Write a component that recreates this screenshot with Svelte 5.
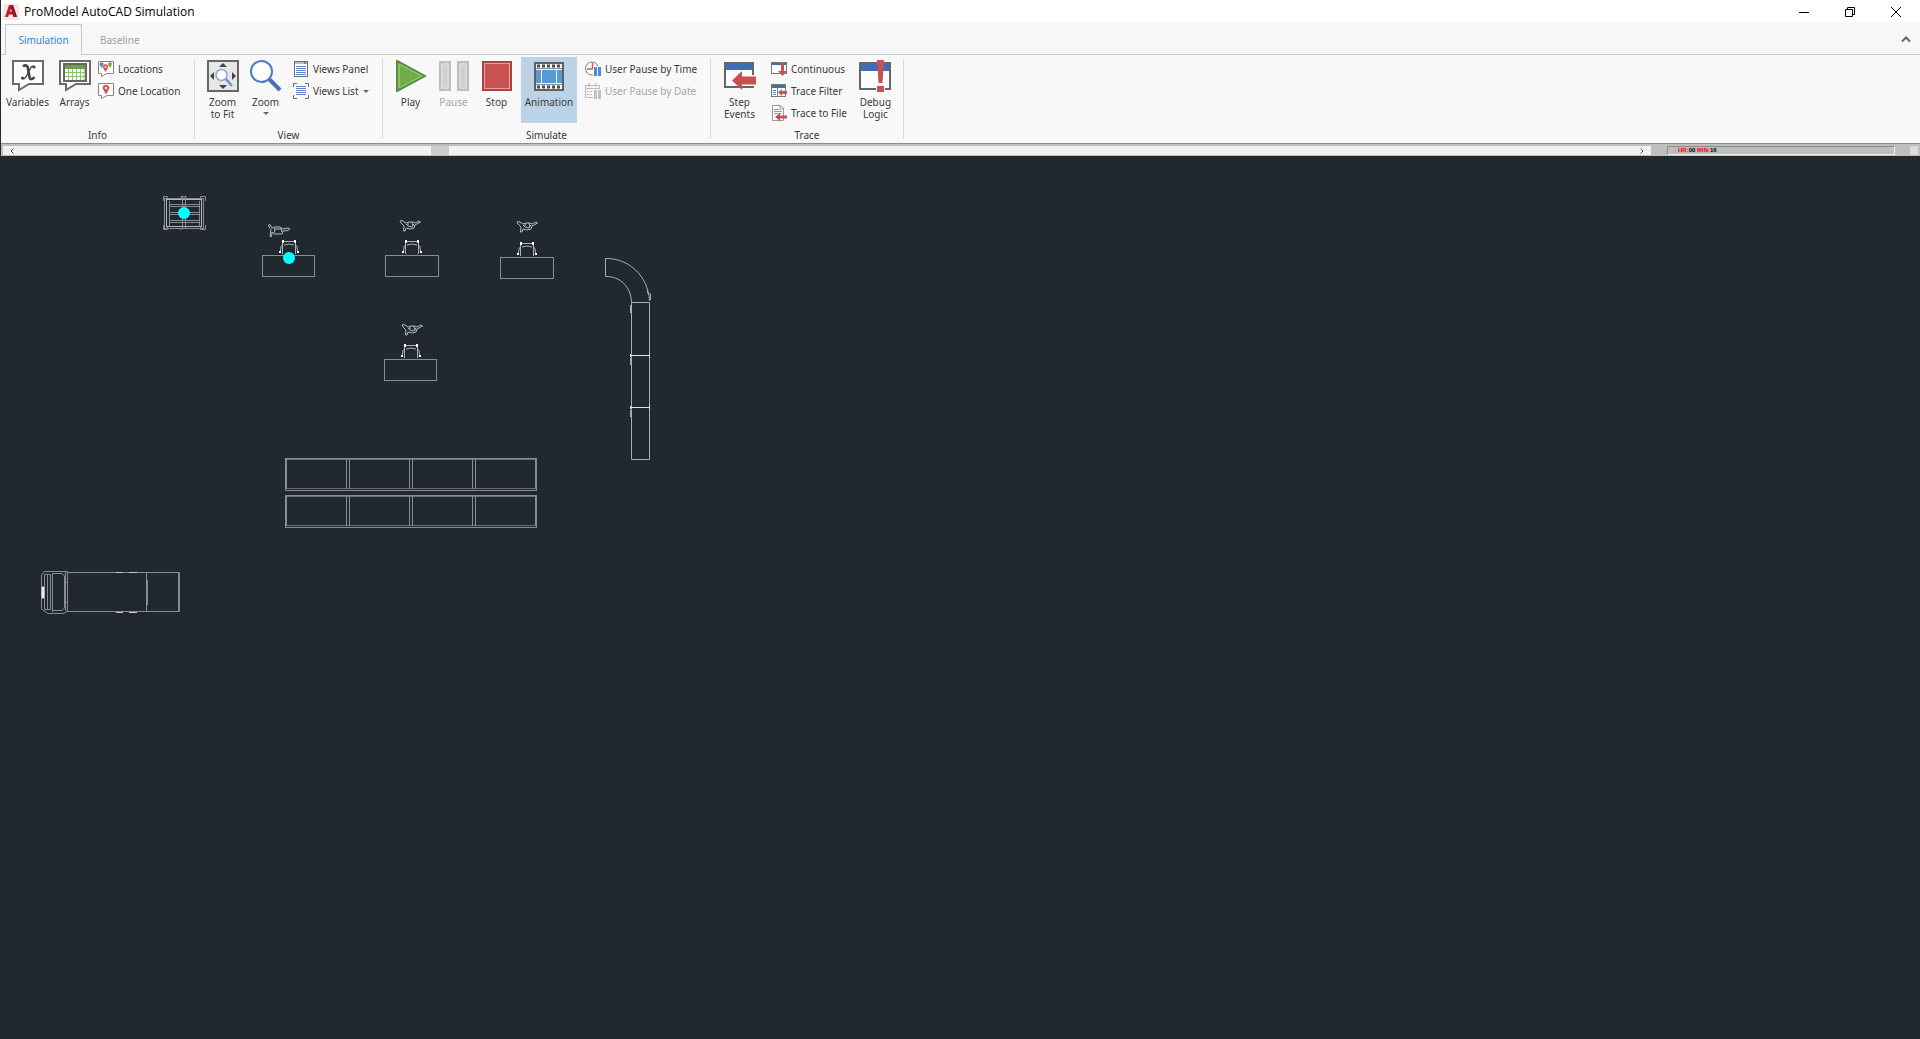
<script>
  const tabs = ['Simulation', 'Baseline'];
  const desks = [
    { x: 262, y: 255, w: 52, chair: [289, 240], person: [268, 224], pose: 'reach' },
    { x: 385, y: 255, w: 53, chair: [412, 240], person: [400, 220], pose: 'stand' },
    { x: 500, y: 257, w: 53, chair: [527, 242], person: [517, 221], pose: 'stand' },
    { x: 384, y: 359, w: 52, chair: [411, 344], person: [402, 324], pose: 'stand' }
  ];
  const racks = [458, 495];
  const bays = [0, 63, 126, 189];
</script>

{#snippet icon(name, size)}
  <svg class="icon" width={size} height={size} viewBox="0 0 {size} {size}" aria-hidden="true">
    {#if name === 'variables' || name === 'arrays'}
      <path d="M1 1H31V24H17L7 30V24H1Z" fill="#fff" stroke="#6b6b6b" stroke-width="2" />
      {#if name === 'variables'}
        <path d="M11 6.500C14 4 16 6 16 9L17.500 17C18 20 20 20 22.500 17" fill="none" stroke="#444" stroke-width="2.600" />
        <path d="M22.500 7C19 4 17.500 11 15.500 14C13.500 18 12 20 10 18" fill="none" stroke="#444" stroke-width="1.300" />
        <circle cx="22" cy="7" r="1.600" fill="#444" /><circle cx="10.500" cy="18" r="1.600" fill="#444" />
      {:else}
        <rect x="5" y="4" width="22" height="17" fill="#fff" stroke="#666" stroke-width="2" />
        <rect x="6" y="5" width="20" height="4" fill="#66a544" />
        <path d="M6 12.500H26M6 16.500H26M9.500 9V20M13.500 9V20M17.500 9V20M21.500 9V20M25 9V20" stroke="#8fc06e" />
      {/if}
    {:else if name === 'locations' || name === 'one'}
      <path d="M.5.5H15.500V12.500H9L3.500 15.500V12.500H.5Z" fill="#fff" stroke="#858585" />
      {#if name === 'locations'}
        <path d="M3.500 7L1.700 4A2 2 0 1 1 5.300 4Z" fill="#5b86cc" />
        <path d="M12 7L10.200 4A2 2 0 1 1 13.800 4Z" fill="#72b04c" />
        <path d="M7.500 11L5.200 7A2.600 2.600 0 1 1 9.800 7Z" fill="#d84a48" /><circle cx="7.500" cy="6" r="1" fill="#fff" />
      {:else}
        <path d="M8 11.500L5.200 6.500A3.200 3.200 0 1 1 10.800 6.500Z" fill="#d05050" /><circle cx="8" cy="5" r="1.200" fill="#fff" />
      {/if}
    {:else if name === 'fit'}
      <rect x="1" y="1" width="30" height="30" fill="#e6e6e6" stroke="#666" stroke-width="2" />
      <path d="M16 3L20 7H12ZM16 29L20 25H12ZM3 16L7 12V20ZM29 16L25 12V20Z" fill="#444" />
      <path d="M18 18L25 26" stroke="#7292cb" stroke-width="2.500" />
      <circle cx="14.500" cy="15" r="5.500" fill="#fff" stroke="#8ba7da" stroke-width="1.500" />
    {:else if name === 'zoom'}
      <path d="M18 18L30 30" stroke="#4772bb" stroke-width="4" />
      <circle cx="11.500" cy="11.500" r="10.500" fill="#fff" stroke="#4d7bc5" stroke-width="2" />
    {:else if name === 'panel'}
      <rect x="1.500" y=".5" width="13" height="15" fill="#fff" stroke="#6f6f6f" />
      <rect x="2" y="1" width="12" height="2" fill="#bcbcbc" /><rect x="11" y="1" width="2" height="2" fill="#c86060" />
      <path d="M3 5.500H13M3 7.500H13M3 9.500H13M3 11.500H13M3 13.500H13" stroke="#5b83c6" />
    {:else if name === 'list'}
      <path d="M.5 4V.5H4M12 .5H15.500V4M15.500 12V15.500H12M4 15.500H.5V12" fill="none" stroke="#6c6c6c" />
      <path d="M3 3.500H13M3 5.500H13M3 7.500H13M3 9.500H13M3 11.500H13" stroke="#5b83c6" />
    {:else if name === 'play'}
      <path d="M2 1L30 16L2 31Z" fill="#6fad48" stroke="#578e38" stroke-width="2" />
      <path d="M4 4L27 16L4 28Z" fill="none" stroke="#a4cf87" />
    {:else if name === 'pause'}
      <path d="M2 2H12V30H2ZM20 2H30V30H20Z" fill="#d0d0d0" stroke="#bebebe" stroke-width="2" />
      <path d="M4 4H10V28H4ZM22 4H28V28H22Z" fill="none" stroke="#e3e3e3" />
    {:else if name === 'stop'}
      <rect x="2" y="2" width="28" height="28" fill="#c75250" stroke="#a84240" stroke-width="2" />
      <rect x="3.500" y="3.500" width="25" height="25" fill="none" stroke="#e4a19e" />
    {:else if name === 'film'}
      <rect x="2" y="3" width="28" height="27" fill="#f3f3f3" stroke="#606060" stroke-width="2" />
      <path d="M4 6H29M4 27H29" stroke="#4d4d4d" stroke-width="3" stroke-dasharray="3 2" />
      <path d="M3 10H8V23H3ZM9 10H23V23H9ZM24 10H29V23H24Z" fill="#569bd6" />
      <path d="M3 8.500H29M3 24.500H29" stroke="#8a8a8a" />
    {:else if name === 'time'}
      <circle cx="7" cy="7.500" r="6.500" fill="#fff" stroke="#777" />
      <path d="M7.500 2V8H2" fill="none" stroke="#dc5550" stroke-width="1.500" />
      <path d="M8 5H16V16H8Z" fill="#f8f8f8" /><path d="M9 6H12V15H9ZM13 6H16V15H13Z" fill="#4b8dca" />
    {:else if name === 'date'}
      <path d="M.5 2.500H14.500V14.500H.5ZM1 5.500H14M4 0V4M11 0V4" fill="none" stroke="#bbb" />
      <path d="M2 8.500H8M2 11.500H8" stroke="#bbb" stroke-dasharray="2 1" />
      <path d="M8 6H16V16H8Z" fill="#f8f8f8" /><path d="M9 7H12V16H9ZM13 7H16V16H13Z" fill="#c2c2c2" />
    {:else if name === 'step'}
      <rect x="1" y="3" width="28" height="24" fill="#fff" stroke="#666" stroke-width="2" />
      <rect x="2" y="4" width="26" height="6" fill="#416db5" />
      <path d="M27 15H31V26H27Z" fill="#f8f8f8" />
      <path d="M8 20.500L18 11V16.500H32V24.500H18V30Z" fill="#c75250" />
    {:else if name === 'debug'}
      <rect x="1" y="3" width="30" height="26" fill="#fff" stroke="#666" stroke-width="2" />
      <rect x="2" y="4" width="28" height="7" fill="#416db5" />
      <path d="M17 12H26V30H17Z" fill="#fff" />
      <path d="M18 0H25L23.500 23H19.500ZM18 26H25V32H18Z" fill="#c75250" />
    {:else if name === 'continuous'}
      <rect x=".5" y="1.500" width="15" height="11" fill="#fff" stroke="#777" /><rect x="1" y="2" width="14" height="2" fill="#416db5" />
      <path d="M10 2H13V10H16L11.500 15L7 10H10Z" fill="#c75250" />
    {:else if name === 'filter'}
      <rect x=".5" y="1.500" width="14" height="12" fill="#fff" stroke="#777" /><rect x="1" y="2" width="13" height="3" fill="#416db5" />
      <path d="M2 7.500H5M2 9.500H5M2 11.500H5" stroke="#5b83c6" /><path d="M6.500 5V13" stroke="#888" />
      <path d="M7 9.500L11 6V8H16V11H11V13Z" fill="#c75250" />
    {:else if name === 'file'}
      <path d="M1.500.5H9.500L12.500 3.500V15.500H1.500Z" fill="#fff" stroke="#999" /><path d="M9 0V4H13" fill="none" stroke="#999" />
      <path d="M3 4.500H8M3 6.500H11M3 8.500H10" stroke="#7b9dd6" />
      <path d="M4 12L9 8V10.500H16V13.500H9V16Z" fill="#c75250" />
    {/if}
  </svg>
{/snippet}

{#snippet big(name, label, opts = {})}
  <button class="big" class:active={opts.active} disabled={opts.disabled}>
    {@render icon(name, 32)}
    <span>{label}</span>
    {#if opts.second}<span>{opts.second}</span>{/if}
    {#if opts.menu}<i class="caret"></i>{/if}
  </button>
{/snippet}

{#snippet small(name, label, opts = {})}
  <button class="small" disabled={opts.disabled}>
    {@render icon(name, 16)}
    <span>{label}</span>
    {#if opts.menu}<i class="caret"></i>{/if}
  </button>
{/snippet}

<div class="window">
  <header class="title">
    <svg class="logo" width="16" height="16" viewBox="0 0 16 16" aria-hidden="true">
      <rect width="16" height="16" fill="#f9e5e2" />
      <path d="M2 13L6 1H10L14 13H10.500L9.800 10.500H6L5 13ZM7 7.500H9.300L8.200 4Z" fill="#b4232a" />
      <path d="M10 1L14 13H10.500L7.500 3Z" fill="#8e1820" />
    </svg>
    <h1>ProModel AutoCAD Simulation</h1>
    <nav class="controls">
      <button aria-label="Minimize"><svg width="10" height="10"><path d="M0 5.500H10" /></svg></button>
      <button aria-label="Restore"><svg width="10" height="10"><path d="M.5 2.500H7.500V9.500H.5ZM2.500 2V.5H9.500V7.500H8" /></svg></button>
      <button aria-label="Close"><svg width="10" height="10"><path d="M0 0L10 10M10 0L0 10" /></svg></button>
    </nav>
  </header>

  <div class="tabs" role="tablist">
    {#each tabs as tab, i}
      <button class="tab" class:selected={i === 0} role="tab" aria-selected={i === 0}>{tab}</button>
    {/each}
    <button class="collapse" aria-label="Collapse ribbon">
      <svg width="10" height="7" viewBox="0 0 10 7"><path d="M1 5.500L5 1.500L9 5.500" fill="none" stroke="#666" stroke-width="2" /></svg>
    </button>
  </div>

  <div class="ribbon">
    <section class="group info">
      <div class="items">
        {@render big('variables', 'Variables')}
        {@render big('arrays', 'Arrays')}
        <div class="stack">
          {@render small('locations', 'Locations')}
          {@render small('one', 'One Location')}
        </div>
      </div>
      <h2>Info</h2>
    </section>
    <section class="group view">
      <div class="items">
        {@render big('fit', 'Zoom', { second: 'to Fit' })}
        {@render big('zoom', 'Zoom', { menu: true })}
        <div class="stack">
          {@render small('panel', 'Views Panel')}
          {@render small('list', 'Views List', { menu: true })}
        </div>
      </div>
      <h2>View</h2>
    </section>
    <section class="group simulate">
      <div class="items">
        {@render big('play', 'Play')}
        {@render big('pause', 'Pause', { disabled: true })}
        {@render big('stop', 'Stop')}
        {@render big('film', 'Animation', { active: true })}
        <div class="stack">
          {@render small('time', 'User Pause by Time')}
          {@render small('date', 'User Pause by Date', { disabled: true })}
        </div>
      </div>
      <h2>Simulate</h2>
    </section>
    <section class="group trace">
      <div class="items">
        {@render big('step', 'Step', { second: 'Events' })}
        <div class="stack">
          {@render small('continuous', 'Continuous')}
          {@render small('filter', 'Trace Filter')}
          {@render small('file', 'Trace to File')}
        </div>
        {@render big('debug', 'Debug', { second: 'Logic' })}
      </div>
      <h2>Trace</h2>
    </section>
  </div>

  <div class="status">
    <div class="scroll">
      <button aria-label="Slower"><svg width="4" height="6"><path d="M3.500 .5L1 3L3.500 5.500" /></svg></button>
      <div class="track"><div class="before"></div><div class="thumb"></div></div>
      <button aria-label="Faster"><svg width="4" height="6"><path d="M.5 .5L3 3L.5 5.500" /></svg></button>
    </div>
    <div class="clock"><b>HR:</b>00 <b>MIN:</b>16</div>
    <div class="grip"></div>
  </div>

  <main>
    <svg class="drawing" role="img" aria-label="Model layout">
      <defs>
        <g id="chair" fill="none" stroke="#aeb2b7">
          <path d="M-6 1.500H6M-5 5Q0 3 5 5M-6.500 2V14M6.500 2V14M-6 4Q-9 6-8.500 12M6 4Q9 6 8.500 12" />
          <path d="M-7 0H-5V3H-7ZM5 0H7V3H5ZM-10 11H-8V13H-10ZM8 11H10V13H8Z" fill="#fff" stroke="none" />
        </g>
        <g id="stand" fill="none" stroke="#b5b9be">
          <path d="M0 1L2 .5L6 3L9 2H13L15 3L19 1L20.500 2L15 5L14 8L10 9L6 8L5 11H3.500L4 6L1 3Z" />
          <path d="M6 4L8 6L12 7L14 4M8 2V5M12 2L13 6" />
        </g>
        <g id="reach" fill="none" stroke="#b5b9be">
          <path d="M.5 1L2 .5L4 4L6 3H12L15 5L20 4L22 5L20 6.500L15 7L14 10H6L4 8L3.500 12.500H2L3 5.500L1 3Z" />
          <path d="M6 4L7 6L6 9M13 4L14 8M7 5H13" />
        </g>
      </defs>

      <g class="sheet">
        <g class="line">
          <rect x="164.500" y="198.500" width="39" height="30" />
          <rect x="166.500" y="199.500" width="35" height="27" stroke="#b5b8bb" />
          <path d="M169.500 201V227M199.500 201V227M182.500 197V229M185.500 197V229M169 204.500H200M169 206.500H200M169 212.500H200M169 214.500H200M169 220.500H200M169 222.500H200" />
          <path d="M163.500 201V196.500H167.500V199M200.500 199V196.500H205.500V201M163.500 225V229.500H167.500V227M200.500 227V229.500H205.500V225" />
          <path d="M181 199V196.500H186V199M181 228V230" />
        </g>

        {#each desks as d}
          <rect class="line" x={d.x + 0.5} y={d.y + 0.5} width={d.w} height="21" />
          <use href="#chair" x={d.chair[0]} y={d.chair[1]} />
          <use href="#{d.pose}" x={d.person[0]} y={d.person[1]} />
        {/each}

        <g class="line bright">
          <path d="M605.500 276.500V258.500C628 258 648 275 649.500 301M605.500 276.500C620 276 631 287 631.500 302" />
          <path d="M631.500 302.500H649.500V459.500H631.500ZM631.500 355.500H649.500M631.500 407.500H649.500" />
          <path d="M630.500 305V313M630.500 358V365M630.500 410V417M647.500 289V293L650.500 294V300" />
          <path d="M630.500 354V357M649.500 353V358M630.500 406V409M649.500 405V410M631 355.500H649M631 407.500H649" stroke="#e0e2e4" />
        </g>

        {#each racks as y}
          <g class="line">
            <rect x="285.500" y={y + 0.5} width="251" height="32" />
            <path d="M286 {y + 1.5}H536M286 {y + 30.5}H536" opacity=".7" />
            {#each bays as b}
              <path d="M{286.5 + b} {y + 1}V{y + 31}M{346.5 + b} {y + 1}V{y + 31}" />
            {/each}
          </g>
        {/each}

        <g class="line">
          <path d="M67.500 572.500H179.500V611.500H67.500ZM146.500 572V611M147.500 580V605M178.500 573V611" />
          <path d="M41.500 575L44 571.500H67.500V611.500L63 613.500H48L41.500 609ZM44.500 574.500H50.500V609.500H44.500ZM47.500 574V610M52.500 573V612M65.500 572V611" />
          <path d="M52 573.500H62L64.500 576V608L62 610.500H52M65 582.500H68M65 602.500H68" />
          <path d="M116 572.500H123M129 572.500H137M116 612.500H123M129 612.500H137" stroke="#c5c7ca" />
          <path d="M42 587H44V598H42Z" fill="#fff" stroke="#ddd" />
        </g>

        <circle cx="184" cy="213" r="6" fill="#0ff" />
        <circle cx="289" cy="258" r="6" fill="#0ff" />
      </g>
    </svg>
  </main>
</div>

<style>
  :global(body) { margin: 0; background: #222830; }
  * { box-sizing: border-box; }
  .window {
    display: flex; flex-direction: column; min-height: 100vh;
    border-left: 1px solid #222830;
    font: 10px/12px "Noto Sans", "Open Sans", sans-serif; color: #3a3a3a;
  }
  button { border: 0; padding: 0; background: none; font: inherit; color: inherit; }
  button:disabled { color: #a6a6a6; }
  h1, h2 { margin: 0; font-weight: 400; }
  .title { display: flex; align-items: center; height: 23px; padding-left: 2px; background: #fff; color: #000; }
  .title h1 { flex: 1; padding-left: 5px; font-family: "Open Sans", "Noto Sans", sans-serif; font-size: 12px; line-height: 16px; }
  .controls { display: flex; align-self: stretch; padding-right: 1px; }
  .controls button { width: 46px; display: grid; place-items: center; }
  .controls svg { display: block; fill: none; stroke: #000; }
  .tabs { display: flex; align-items: stretch; height: 32px; padding-left: 4px; background: #f7f7f7; box-shadow: inset 0 -1px #c8c8c8; }
  .tab { padding: 0 18px; margin-top: 1px; color: #a0a0a0; }
  .tab.selected { width: 77px; padding: 0; color: #2a86d1; background: #f8f8f8; border: 1px solid #c8c8c8; border-bottom: 0; }
  .collapse { margin-left: auto; padding: 0 9px; }
  .ribbon { display: flex; height: 88px; padding: 2px 0; background: #f8f8f8; }
  .group { display: flex; flex-direction: column; border-right: 1px solid #d9d9d9; margin: 2px 0; }
  .items { display: flex; flex: none; height: 71px; margin-top: -2px; }
  .group h2 { font-size: 10px; line-height: 14px; text-align: center; }
  .info { width: 194px; }
  .info .items { padding-left: 3px; }
  .view { width: 188px; }
  .view .items { padding-left: 6px; }
  .simulate { width: 328px; }
  .simulate .items { padding-left: 6px; }
  .trace { width: 193px; }
  .trace .items { padding-left: 8px; }
  .big { display: flex; flex-direction: column; align-items: center; width: 43px; height: 66px; padding-top: 3px; flex: none; }
  .big .icon { margin-bottom: 4px; }
  .big.active { width: 56px; margin-left: 3px; background: #bcd3e7; }
  .info .big { width: 47px; }
  .trace .big { width: 41px; }
  .icon { display: block; flex: none; }
  .stack { display: flex; flex-direction: column; padding-top: 1px; }
  .view .stack { padding-left: 6px; }
  .simulate .stack { padding-left: 8px; }
  .trace .stack { padding: 1px 8px 0 11px; }
  .small { display: flex; align-items: center; gap: 4px; height: 22px; white-space: nowrap; }
  .caret { border: 3px solid transparent; border-top-color: #666; border-bottom: 0; }
  .big .caret { margin-top: 4px; }
  .status { display: flex; height: 13px; padding: 2px 2px 1px 2px; background: #bebebe; border-top: 1px solid #8c8c8c; }
  .scroll { flex: 1; display: flex; background: #f0f0f0; }
  .scroll button { width: 18px; display: grid; place-items: center; }
  .scroll svg { fill: none; stroke: #555; }
  .track { flex: 1; display: flex; }
  .before { flex: 0 0 25%; margin-right: 7px; }
  .thumb { width: 18px; background: #cdcdcd; }
  .clock { width: 228px; margin: 0 15px 0 16px; padding-left: 10px; border: 1px solid #8c8c8c; border-right-color: #fff; border-bottom-color: #eee; font: 700 6px/7px "Liberation Sans", sans-serif; color: #000; }
  .clock b { color: #f00; }
  .grip { width: 8px; background: #ddd; }
  main { flex: 1; display: flex; background: #222830; }
  .drawing { width: 100%; min-height: 480px; }
  .sheet { transform: translate(-1px, -156px); }
  .line { fill: none; stroke: #898d92; }
  .bright { stroke: #a8abb0; }
</style>
